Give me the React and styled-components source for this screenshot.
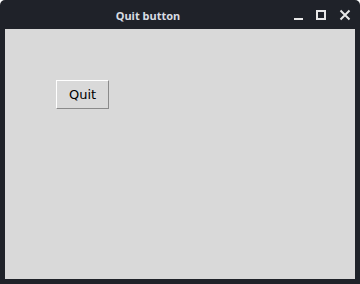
import React from "react";
import styled, { createGlobalStyle } from "styled-components";

const Global = createGlobalStyle`
  html, body { margin: 0; padding: 0; background: #ffffff; }
  body { width: 360px; height: 284px; overflow: hidden; }
`;

const Window = styled.div`
  width: 360px;
  height: 284px;
  box-sizing: border-box;
  background: #1f2229;
  border-radius: 5px 5px 0 0;
  display: flex;
  flex-direction: column;
  padding: 0 5px 5px 5px;
`;

const TitleBar = styled.div`
  height: 29px;
  display: flex;
  align-items: center;
  flex-shrink: 0;
`;

const Title = styled.div`
  flex: 1;
  text-align: center;
  font-family: "Noto Sans", sans-serif;
  font-weight: bold;
  font-size: 11px;
  color: #d8dce2;
  padding-left: 3px;
  margin-top: 1px;
`;

const Controls = styled.div`
  display: flex;
  align-items: center;
  gap: 6px;
  padding-right: 1px;
`;

const Ctrl = styled.div`
  width: 18px;
  height: 18px;
  display: flex;
  align-items: center;
  justify-content: center;
`;

const Content = styled.div`
  flex: 1;
  background: #d9d9d9;
  padding: 51px 0 0 51px;
`;

const Button = styled.button`
  box-sizing: border-box;
  width: 53px;
  height: 29px;
  background: #d9d9d9;
  border: 1px solid;
  border-color: #ffffff #8a8a8a #8a8a8a #ffffff;
  font-family: "DejaVu Sans", sans-serif;
  font-size: 13px;
  color: #000;
  padding: 0;
  margin: 0;
`;

export default function App() {
  return (
    <>
      <Global />
      <Window>
        <TitleBar>
          <Title>Quit button</Title>
          <Controls>
            <Ctrl>
              <svg width="12" height="12" viewBox="0 0 12 12">
                <rect x="3" y="9" width="9" height="2" fill="#e8e8e8" />
              </svg>
            </Ctrl>
            <Ctrl>
              <svg width="12" height="12" viewBox="0 0 12 12">
                <rect x="2" y="2" width="8" height="8" fill="none" stroke="#e8e8e8" strokeWidth="2" />
              </svg>
            </Ctrl>
            <Ctrl>
              <svg width="12" height="12" viewBox="0 0 12 12">
                <path d="M1.5 1.5 L10.5 10.5 M10.5 1.5 L1.5 10.5" stroke="#e8e8e8" strokeWidth="2" />
              </svg>
            </Ctrl>
          </Controls>
        </TitleBar>
        <Content>
          <Button>Quit</Button>
        </Content>
      </Window>
    </>
  );
}
